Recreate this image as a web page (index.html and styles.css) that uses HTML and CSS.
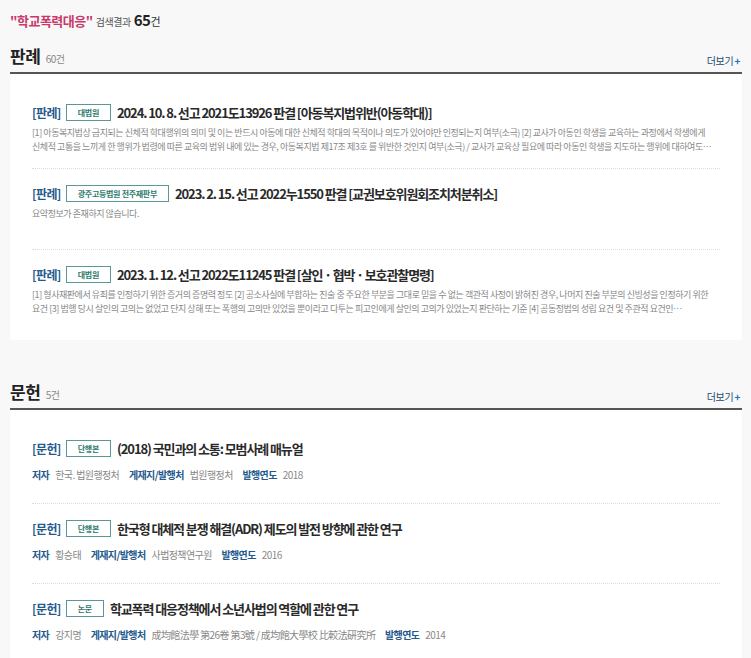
FILE: index.html
```html
<html>
    <head>
        <title>검색결과</title>
        <meta name="viewport" content="width=device-width, initial-scale=1.0">
        <link rel="stylesheet" href="styles.css">
    </head>
    <body>
    <div class="container-main">
        <div class="search-title">
            <span class="keyword">"학교폭력대응"</span>
            <span class="result-label">검색결과</span>
            <span class="result-count">65</span><span class="result-unit">건</span>
        </div>

        <!-- 판례 -->
        <div class="section">
            <div class="section-head">
                <h2 class="section-name">판례 <span class="section-count">60건</span></h2>
                <a class="more-link">더보기<span class="plus">+</span></a>
            </div>
            <ul class="item-list">
                <li class="item">
                    <div class="item-title">
                        <span class="item-type">[판례]</span>
                        <span class="badge">대법원</span>
                        <span class="item-name">2024. 10. 8. 선고 2021도13926 판결 [아동복지법위반(아동학대)]</span>
                    </div>
                    <p class="summary">[1] 아동복지법상 금지되는 신체적 학대행위의 의미 및 이는 반드시 아동에 대한 신체적 학대의 목적이나 의도가 있어야만 인정되는지 여부(소극) [2] 교사가 아동인 학생을 교육하는 과정에서 학생에게 신체적 고통을 느끼게 한 행위가 법령에 따른 교육의 범위 내에 있는 경우, 아동복지법 제17조 제3호 를 위반한 것인지 여부(소극) / 교사가 교육상 필요에 따라 아동인 학생을 지도하는 행위에 대하여도 아동복지법 위반죄가 성립하는지 여부</p>
                </li>
                <li class="item">
                    <div class="item-title">
                        <span class="item-type">[판례]</span>
                        <span class="badge">광주고등법원 전주재판부</span>
                        <span class="item-name">2023. 2. 15. 선고 2022누1550 판결 [교권보호위원회조치처분취소]</span>
                    </div>
                    <p class="summary">요약정보가 존재하지 않습니다.</p>
                </li>
                <li class="item">
                    <div class="item-title">
                        <span class="item-type">[판례]</span>
                        <span class="badge">대법원</span>
                        <span class="item-name">2023. 1. 12. 선고 2022도11245 판결 [살인 · 협박 · 보호관찰명령]</span>
                    </div>
                    <p class="summary">[1] 형사재판에서 유죄를 인정하기 위한 증거의 증명력 정도 [2] 공소사실에 부합하는 진술 중 주요한 부분을 그대로 믿을 수 없는 객관적 사정이 밝혀진 경우, 나머지 진술 부분의 신빙성을 인정하기 위한 요건 [3] 범행 당시 살인의 고의는 없었고 단지 상해 또는 폭행의 고의만 있었을 뿐이라고 다투는 피고인에게 살인의 고의가 있었는지 판단하는 기준 [4] 공동정범의 성립 요건 및 주관적 요건인 '공동가공의 의사'의 내용</p>
                </li>
            </ul>
        </div>

        <!-- 문헌 -->
        <div class="section">
            <div class="section-head">
                <h2 class="section-name">문헌 <span class="section-count">5건</span></h2>
                <a class="more-link">더보기<span class="plus">+</span></a>
            </div>
            <ul class="item-list">
                <li class="item">
                    <div class="item-title">
                        <span class="item-type">[문헌]</span>
                        <span class="badge">단행본</span>
                        <span class="item-name">(2018) 국민과의 소통: 모범사례 매뉴얼</span>
                    </div>
                    <p class="meta">
                        <span class="meta-group"><b>저자</b>한국. 법원행정처</span>
                        <span class="meta-group"><b>게재지/발행처</b>법원행정처</span>
                        <span class="meta-group"><b>발행연도</b>2018</span>
                    </p>
                </li>
                <li class="item">
                    <div class="item-title">
                        <span class="item-type">[문헌]</span>
                        <span class="badge">단행본</span>
                        <span class="item-name">한국형 대체적 분쟁 해결(ADR) 제도의 발전 방향에 관한 연구</span>
                    </div>
                    <p class="meta">
                        <span class="meta-group"><b>저자</b>황승태</span>
                        <span class="meta-group"><b>게재지/발행처</b>사법정책연구원</span>
                        <span class="meta-group"><b>발행연도</b>2016</span>
                    </p>
                </li>
                <li class="item">
                    <div class="item-title">
                        <span class="item-type">[문헌]</span>
                        <span class="badge">논문</span>
                        <span class="item-name">학교폭력 대응정책에서 소년사법의 역할에 관한 연구</span>
                    </div>
                    <p class="meta">
                        <span class="meta-group"><b>저자</b>강지명</span>
                        <span class="meta-group"><b>게재지/발행처</b>成均館法學 第26卷 第3號 / 成均館大學校 比較法硏究所</span>
                        <span class="meta-group"><b>발행연도</b>2014</span>
                    </p>
                </li>
            </ul>
        </div>
    </div>
    </body>
</html>
```

FILE: styles.css
```css
body{
    background-color: #f8f8f8;
    margin: 0;
    padding: 0;
    color: #222;
    font-family: 'Noto Sans CJK KR', 'Noto Sans', sans-serif;
}

.container-main{
    padding: 10px 9px 0 10px;
}

.search-title{
    height: 18px;
    line-height: 18px;
    letter-spacing: -0.5px;
}

.keyword{
    color: #c83a6c;
    font-weight: bold;
    font-size: 13px;
}

.result-label{
    color: #555;
    font-size: 10px;
}

.result-count{
    font-weight: bold;
    font-size: 15px;
    color: #222;
}

.result-unit{
    font-size: 11px;
    color: #333;
}

.section{
    margin-bottom: 40px;
}

.section-head{
    display: flex;
    justify-content: space-between;
    align-items: flex-end;
    height: 28px;
    margin-top: 16px;
    border-bottom: 2px solid #555;
}

.section-name{
    margin: 0;
    font-size: 17px;
    line-height: 26px;
    font-weight: bold;
    color: #222;
    letter-spacing: -0.5px;
}

.section-count{
    font-size: 10px;
    font-weight: normal;
    color: #888;
    margin-left: 2px;
}

.more-link{
    font-size: 10px;
    color: #24496e;
    line-height: 22px;
    letter-spacing: -0.3px;
    margin-right: 2px;
}

.plus{
    color: #2b6cb0;
    font-weight: bold;
    margin-left: 1px;
}

.item-list{
    list-style: none;
    margin: 0;
    padding: 14px 22px 10px 22px;
    background-color: #fff;
}

.item{
    padding: 14px 0 15px 0;
    border-top: 1px dotted #dcdcdc;
}

.item:first-child{
    border-top: none;
}

.item-title{
    display: flex;
    align-items: center;
    height: 20px;
    white-space: nowrap;
}

.item-type{
    color: #24598c;
    font-weight: bold;
    font-size: 12px;
    letter-spacing: -0.6px;
    margin-right: 5px;
}

.badge{
    border: 1px solid #5a9896;
    color: #2c7a6c;
    font-size: 8px;
    font-weight: bold;
    height: 15px;
    line-height: 15px;
    padding: 0 11px;
    margin-right: 6px;
    letter-spacing: -0.3px;
}

.item-name{
    font-weight: bold;
    font-size: 13px;
    color: #2a2a2a;
    letter-spacing: -1.1px;
}

.summary{
    margin: 4px 0 0 0;
    padding-right: 5px;
    font-size: 9px;
    line-height: 13.5px;
    min-height: 27px;
    color: #888;
    letter-spacing: -0.45px;
    word-break: keep-all;
    display: -webkit-box;
    -webkit-line-clamp: 2;
    -webkit-box-orient: vertical;
    overflow: hidden;
}

.meta{
    margin: 10px 0 6px 0;
    font-size: 10px;
    line-height: 14px;
    color: #888;
    letter-spacing: -0.6px;
}

.meta-group{
    margin-right: 8px;
}

.meta b{
    color: #24598c;
    margin-right: 6px;
}
```
